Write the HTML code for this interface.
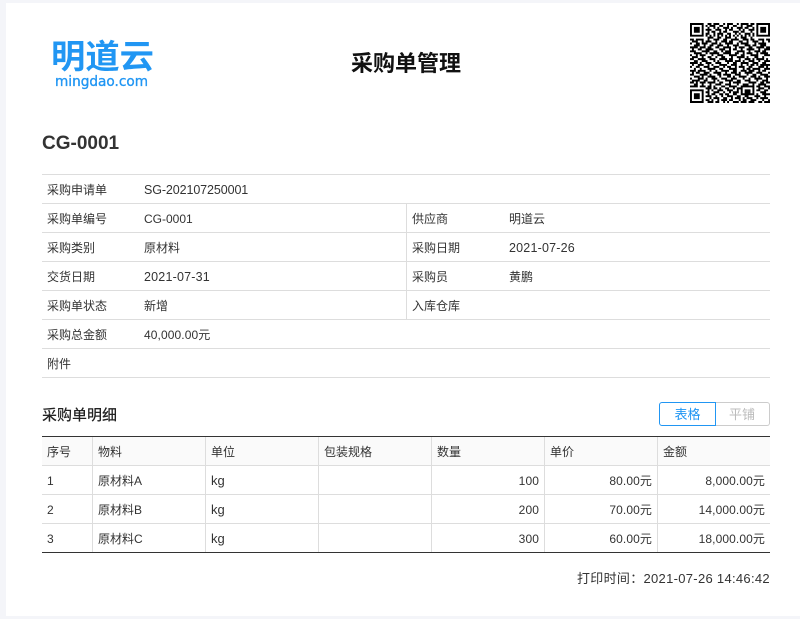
<!DOCTYPE html>
<html lang="zh"><head><meta charset="utf-8"><title>采购单管理</title>
<style>
html,body{margin:0;padding:0;width:800px;height:619px;overflow:hidden;background:#f4f5f9}
body{position:relative;font-family:"Liberation Sans","Noto Sans CJK SC",sans-serif;font-size:12px;color:#333}
.card{position:absolute;left:6px;top:3px;width:794px;height:613px;background:#fff}
.a{position:absolute;white-space:nowrap;line-height:16px;margin-top:1px}
.h{position:absolute;left:42px;width:728px;height:1px;background:#ddd}
.v{position:absolute;width:1px;background:#ddd}
.r{text-align:right;width:100px;letter-spacing:.1px}
.d{font-size:12.5px;letter-spacing:.2px}
.k{font-size:13px}
</style></head><body>
<div class="card"></div>

<svg class="a" style="left:45px;top:32px;margin:0" width="115" height="62" viewBox="0 0 115 62">
<text x="6" y="36" font-family="Noto Sans CJK SC, sans-serif" font-size="33" font-weight="700" fill="#2196f3" textLength="103" lengthAdjust="spacingAndGlyphs">明道云</text>
<text x="10" y="54" font-family="DejaVu Sans, sans-serif" font-size="14" fill="#2196f3" stroke="#2196f3" stroke-width=".35" textLength="93" lengthAdjust="spacingAndGlyphs">mingdao.com</text>
</svg>

<div class="a" style="left:351px;top:48px;font-size:22px;line-height:30px;font-weight:700;color:#111">采购单管理</div>

<svg class="a" style="left:690px;top:23px;margin:0" width="80" height="80" viewBox="0 0 41 41">
<path fill="#000" fill-rule="evenodd" d="M0 0h7v7H0zM1 1v5h5V1zM2 2h3v3H2zM34 0h7v7h-7zM35 1v5h5V1zM36 2h3v3h-3zM0 34h7v7H0zM1 35v5h5v-5zM2 36h3v3H2z"/>
<path stroke="#000" stroke-width="1" fill="none" d="
M9 .5h2M12 .5h3M17 .5h1M19 .5h3M24 .5h1M26 .5h4M31 .5h2
M8 1.5h1M10 1.5h3M15 1.5h2M19 1.5h1M22 1.5h2M26 1.5h1M29 1.5h3
M9 2.5h1M12 2.5h1M14 2.5h1M17 2.5h3M21 2.5h1M24 2.5h3M28 2.5h2M32 2.5h1
M8 3.5h3M13 3.5h3M18 3.5h1M20 3.5h2M25 3.5h1M27 3.5h1M30 3.5h3
M9 4.5h1M11 4.5h2M15 4.5h1M17 4.5h2M22 4.5h3M26 4.5h2M31 4.5h1
M8 5.5h2M12 5.5h1M14 5.5h3M19 5.5h2M23 5.5h1M25 5.5h1M28 5.5h3M32 5.5h1
M8 6.5h1M10 6.5h1M12 6.5h1M14 6.5h1M16 6.5h1M18 6.5h1M20 6.5h1M22 6.5h1M24 6.5h1M26 6.5h1M28 6.5h1M30 6.5h1M32 6.5h1
M9 7.5h3M14 7.5h2M18 7.5h3M23 7.5h1M26 7.5h3M31 7.5h1
M0 8.5h2M3 8.5h4M9 8.5h1M12 8.5h3M17 8.5h2M21 8.5h4M27 8.5h3M31 8.5h2M35 8.5h3M39 8.5h2
M1 9.5h3M6 9.5h1M8 9.5h3M13 9.5h1M16 9.5h3M20 9.5h2M25 9.5h2M29 9.5h1M32 9.5h3M37 9.5h1M40 9.5h1
M0 10.5h1M3 10.5h2M6 10.5h3M11 10.5h3M15 10.5h1M18 10.5h4M24 10.5h1M26 10.5h4M33 10.5h1M35 10.5h4
M2 11.5h3M7 11.5h1M10 11.5h2M14 11.5h3M19 11.5h1M22 11.5h3M28 11.5h3M32 11.5h2M36 11.5h3
M0 12.5h4M5 12.5h3M9 12.5h2M13 12.5h2M17 12.5h4M23 12.5h1M25 12.5h3M30 12.5h2M34 12.5h4M39 12.5h2
M1 13.5h1M4 13.5h2M8 13.5h4M15 13.5h3M20 13.5h1M22 13.5h2M26 13.5h1M29 13.5h4M35 13.5h1M38 13.5h3
M0 14.5h3M6 14.5h4M12 14.5h2M16 14.5h1M18 14.5h3M24 14.5h4M30 14.5h1M33 14.5h3M37 14.5h2
M2 15.5h4M8 15.5h1M10 15.5h5M17 15.5h4M23 15.5h2M27 15.5h1M29 15.5h3M34 15.5h1M36 15.5h4
M0 16.5h1M3 16.5h1M5 16.5h3M11 16.5h1M14 16.5h3M20 16.5h4M26 16.5h2M31 16.5h4M38 16.5h3
M1 17.5h3M6 17.5h1M9 17.5h2M13 17.5h1M16 17.5h2M21 17.5h1M24 17.5h4M29 17.5h1M33 17.5h2M37 17.5h1
M0 18.5h2M4 18.5h4M10 18.5h3M15 18.5h4M20 18.5h2M25 18.5h1M28 18.5h3M32 18.5h1M34 18.5h4M39 18.5h1
M2 19.5h2M6 19.5h3M12 19.5h1M14 19.5h1M18 19.5h4M23 19.5h3M27 19.5h1M30 19.5h3M35 19.5h1M38 19.5h3
M0 20.5h4M5 20.5h1M8 20.5h3M13 20.5h3M19 20.5h1M22 20.5h2M26 20.5h4M32 20.5h3M37 20.5h2
M1 21.5h1M4 21.5h3M9 21.5h1M11 21.5h1M15 21.5h4M21 21.5h3M26 21.5h1M29 21.5h1M31 21.5h2M34 21.5h1M36 21.5h5
M0 22.5h1M3 22.5h2M7 22.5h3M12 22.5h3M17 22.5h1M19 22.5h2M23 22.5h1M25 22.5h3M30 22.5h2M35 22.5h3M39 22.5h1
M2 23.5h1M5 23.5h1M9 23.5h4M15 23.5h2M20 23.5h4M27 23.5h1M29 23.5h2M32 23.5h4M38 23.5h3
M0 24.5h3M4 24.5h4M10 24.5h1M13 24.5h1M16 24.5h4M22 24.5h2M26 24.5h3M30 24.5h3M35 24.5h1M37 24.5h2
M1 25.5h1M3 25.5h2M7 25.5h3M12 25.5h4M18 25.5h1M21 25.5h3M25 25.5h1M28 25.5h4M34 25.5h3M40 25.5h1
M0 26.5h2M5 26.5h4M10 26.5h1M14 26.5h2M17 26.5h4M23 26.5h3M29 26.5h1M32 26.5h2M36 26.5h4
M2 27.5h3M6 27.5h1M9 27.5h4M15 27.5h1M19 27.5h2M22 27.5h1M25 27.5h4M31 27.5h3M35 27.5h1M38 27.5h3
M0 28.5h1M4 28.5h3M8 28.5h1M11 28.5h3M16 28.5h3M21 28.5h3M27 28.5h1M30 28.5h1M33 28.5h4M39 28.5h1
M1 29.5h4M7 29.5h2M12 29.5h1M14 29.5h1M18 29.5h4M24 29.5h2M28 29.5h3M34 29.5h1M37 29.5h3
M0 30.5h2M3 30.5h1M5 30.5h3M9 30.5h4M15 30.5h2M20 30.5h1M22 30.5h4M30 30.5h4M36 30.5h2M39 30.5h2
M2 31.5h2M6 31.5h1M10 31.5h1M13 31.5h3M18 31.5h3M24 31.5h1M27 31.5h3M32 31.5h1M35 31.5h4
M0 32.5h4M5 32.5h3M9 32.5h2M12 32.5h1M16 32.5h2M20 32.5h4M26 32.5h7M34 32.5h2M38 32.5h3
M8 33.5h3M12 33.5h2M15 33.5h1M18 33.5h2M22 33.5h1M24 33.5h2M26 33.5h1M32 33.5h1M35 33.5h3M40 33.5h1
M9 34.5h1M11 34.5h1M14 34.5h3M19 34.5h3M24 34.5h1M26 34.5h1M28 34.5h3M32 34.5h1M34 34.5h2M38 34.5h2
M8 35.5h2M12 35.5h3M17 35.5h1M20 35.5h1M22 35.5h3M26 35.5h1M28 35.5h3M32 35.5h1M36 35.5h3
M9 36.5h1M11 36.5h2M15 36.5h2M18 36.5h2M22 36.5h2M26 36.5h7M34 36.5h1M37 36.5h4
M8 37.5h3M13 37.5h1M16 37.5h1M19 37.5h3M24 37.5h2M28 37.5h2M33 37.5h3M38 37.5h1
M10 38.5h1M12 38.5h3M17 38.5h2M21 38.5h1M23 38.5h3M27 38.5h1M29 38.5h3M34 38.5h1M36 38.5h4
M8 39.5h2M11 39.5h1M14 39.5h1M16 39.5h3M20 39.5h2M25 39.5h1M27 39.5h2M31 39.5h3M37 39.5h1M40 39.5h1
M9 40.5h3M13 40.5h2M17 40.5h1M19 40.5h1M22 40.5h3M26 40.5h3M30 40.5h3M35 40.5h2M38 40.5h3"/>
</svg>

<div class="a" style="left:42px;top:131px;font-size:19px;line-height:24px;font-weight:700;color:#333">CG-0001</div>

<div class="h" style="top:174px"></div>
<div class="h" style="top:203px"></div>
<div class="h" style="top:232px"></div>
<div class="h" style="top:261px"></div>
<div class="h" style="top:290px"></div>
<div class="h" style="top:319px"></div>
<div class="h" style="top:348px"></div>
<div class="h" style="top:377px"></div>
<div class="v" style="left:406px;top:203px;height:116px"></div>

<div class="a" style="left:47px;top:181px">采购申请单</div><div class="a" style="left:144px;top:181px;font-size:12.5px;letter-spacing:-.1px">SG-202107250001</div>
<div class="a" style="left:47px;top:210px">采购单编号</div><div class="a" style="left:144px;top:210px">CG-0001</div>
<div class="a" style="left:412px;top:210px">供应商</div><div class="a" style="left:509px;top:210px">明道云</div>
<div class="a" style="left:47px;top:239px">采购类别</div><div class="a" style="left:144px;top:239px">原材料</div>
<div class="a" style="left:412px;top:239px">采购日期</div><div class="a d" style="left:509px;top:239px">2021-07-26</div>
<div class="a" style="left:47px;top:268px">交货日期</div><div class="a d" style="left:144px;top:268px">2021-07-31</div>
<div class="a" style="left:412px;top:268px">采购员</div><div class="a" style="left:509px;top:268px">黄鹏</div>
<div class="a" style="left:47px;top:297px">采购单状态</div><div class="a" style="left:144px;top:297px">新增</div>
<div class="a" style="left:412px;top:297px">入库仓库</div>
<div class="a" style="left:47px;top:326px">采购总金额</div><div class="a" style="left:144px;top:326px;letter-spacing:.1px">40,000.00元</div>
<div class="a" style="left:47px;top:355px">附件</div>

<div class="a" style="left:42px;top:406px;margin:0;font-size:15px;line-height:18px;font-weight:500;color:#222;font-family:'Noto Sans CJK SC',sans-serif">采购单明细</div>

<div class="a" style="left:715px;top:402px;margin:0;width:54px;height:22px;border:1px solid #ccc;border-left:0;border-radius:0 3px 3px 0;text-align:center;line-height:24px;font-size:13px;color:#bbb">平铺</div>
<div class="a" style="left:659px;top:402px;margin:0;width:55px;height:22px;border:1px solid #2196f3;border-radius:3px 0 0 3px;text-align:center;line-height:24px;font-size:13px;color:#2196f3">表格</div>

<div class="a" style="left:42px;top:437px;margin:0;width:728px;height:28px;background:#fafafa"></div>
<div class="h" style="top:465px"></div>
<div class="h" style="top:494px"></div>
<div class="h" style="top:523px"></div>
<div class="h" style="top:436px;background:#333"></div>
<div class="v" style="left:92px;top:437px;height:115px"></div>
<div class="v" style="left:205px;top:437px;height:115px"></div>
<div class="v" style="left:318px;top:437px;height:115px"></div>
<div class="v" style="left:431px;top:437px;height:115px"></div>
<div class="v" style="left:544px;top:437px;height:115px"></div>
<div class="v" style="left:657px;top:437px;height:115px"></div>
<div class="h" style="top:552px;background:#333"></div>

<div class="a" style="left:47px;top:443px">序号</div>
<div class="a" style="left:98px;top:443px">物料</div>
<div class="a" style="left:211px;top:443px">单位</div>
<div class="a" style="left:324px;top:443px">包装规格</div>
<div class="a" style="left:437px;top:443px">数量</div>
<div class="a" style="left:550px;top:443px">单价</div>
<div class="a" style="left:663px;top:443px">金额</div>

<div class="a" style="left:47px;top:472px">1</div><div class="a" style="left:98px;top:472px">原材料A</div><div class="a k" style="left:211px;top:472px">kg</div>
<div class="a r" style="left:439px;top:472px">100</div><div class="a r" style="left:552px;top:472px">80.00元</div><div class="a r" style="left:665px;top:472px">8,000.00元</div>
<div class="a" style="left:47px;top:501px">2</div><div class="a" style="left:98px;top:501px">原材料B</div><div class="a k" style="left:211px;top:501px">kg</div>
<div class="a r" style="left:439px;top:501px">200</div><div class="a r" style="left:552px;top:501px">70.00元</div><div class="a r" style="left:665px;top:501px">14,000.00元</div>
<div class="a" style="left:47px;top:530px">3</div><div class="a" style="left:98px;top:530px">原材料C</div><div class="a k" style="left:211px;top:530px">kg</div>
<div class="a r" style="left:439px;top:530px">300</div><div class="a r" style="left:552px;top:530px">60.00元</div><div class="a r" style="left:665px;top:530px">18,000.00元</div>

<div class="a" style="left:577px;top:570px;font-size:13px;letter-spacing:.3px">打印时间：2021-07-26 14:46:42</div>
</body></html>
